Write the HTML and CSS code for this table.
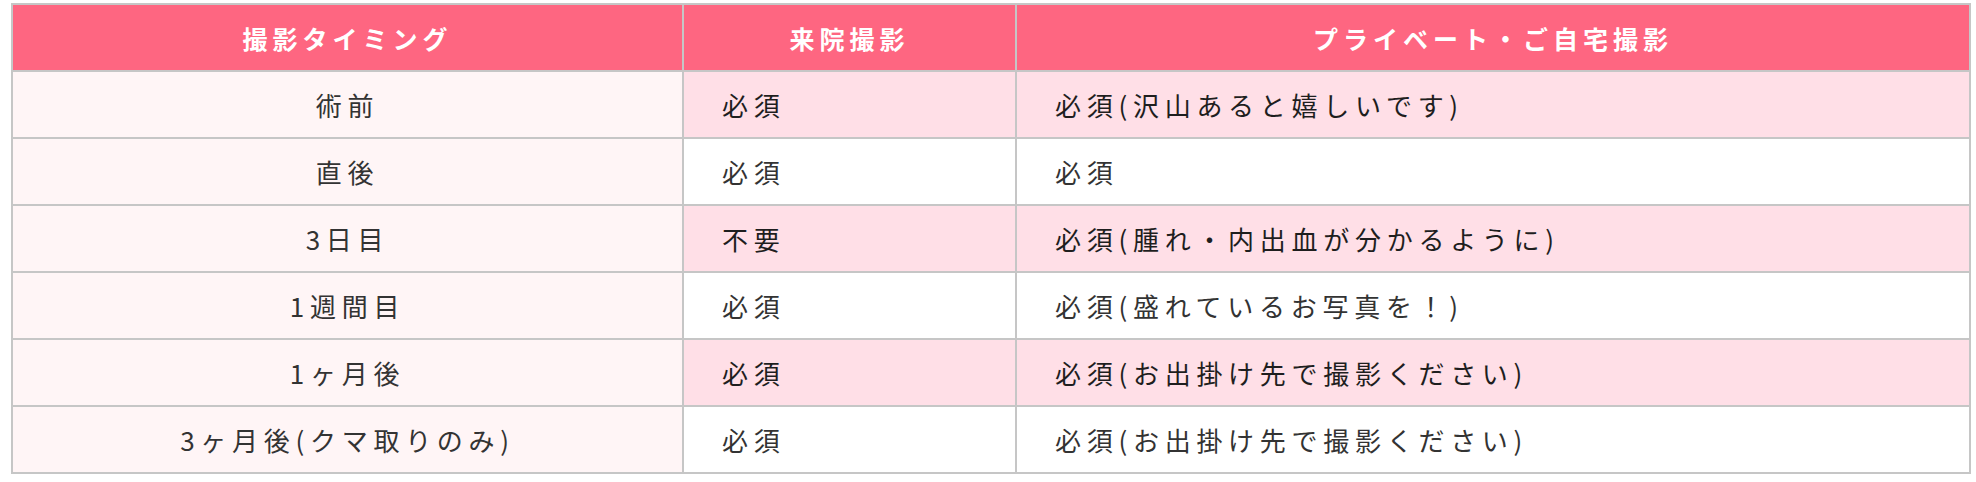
FILE: index.html
```html
<!DOCTYPE html>
<html lang="ja">
<head>
<meta charset="utf-8">
<link rel="stylesheet" href="styles.css">
</head>
<body>
<div class="wrap">
<table class="schedule">
  <colgroup>
    <col class="c1"><col class="c2"><col class="c3">
  </colgroup>
  <thead>
    <tr><th>撮影タイミング</th><th>来院撮影</th><th>プライベート・ご自宅撮影</th></tr>
  </thead>
  <tbody>
    <tr class="odd"><td class="timing">術前</td><td>必須</td><td>必須(沢山あると嬉しいです)</td></tr>
    <tr><td class="timing">直後</td><td>必須</td><td>必須</td></tr>
    <tr class="odd"><td class="timing">3日目</td><td>不要</td><td>必須(腫れ・内出血が分かるように)</td></tr>
    <tr><td class="timing">1週間目</td><td>必須</td><td>必須(盛れているお写真を！)</td></tr>
    <tr class="odd"><td class="timing">1ヶ月後</td><td>必須</td><td>必須(お出掛け先で撮影ください)</td></tr>
    <tr><td class="timing">3ヶ月後(クマ取りのみ)</td><td>必須</td><td>必須(お出掛け先で撮影ください)</td></tr>
  </tbody>
</table>
</div>
</body>
</html>
```

FILE: styles.css
```css
html, body {
  margin: 0;
  padding: 0;
  background: #ffffff;
}
.wrap {
  padding: 3px 5px 0 11px;
}
.schedule {
  width: 100%;
  border-collapse: collapse;
  border: 2px solid #c6c6c6;
  table-layout: fixed;
  font-family: "Noto Sans CJK JP", "Noto Sans", sans-serif;
}
.c1 { width: 671px; }
.c2 { width: 333px; }
.schedule th,
.schedule td {
  border: 2px solid #c6c6c6;
  height: 65px;
  padding: 0 0 0 38px;
  font-size: 26px;
  line-height: 1.2;
  letter-spacing: 0.22em;
  text-align: left;
  color: #333333;
  background: #ffffff;
  vertical-align: middle;
  white-space: nowrap;
}
.schedule th {
  background: #fe6681;
  color: #ffffff;
  font-weight: 700;
  font-size: 25px;
  text-align: center;
  padding: 0;
  letter-spacing: 0.2em;
}
.schedule td.timing {
  background: #fff5f6;
  text-align: center;
  padding: 0;
}
.schedule tr.odd td {
  background: #ffdfe7;
  color: #1e1e1e;
}
.schedule tr.odd td.timing {
  background: #fff5f6;
  color: #333333;
}
```
